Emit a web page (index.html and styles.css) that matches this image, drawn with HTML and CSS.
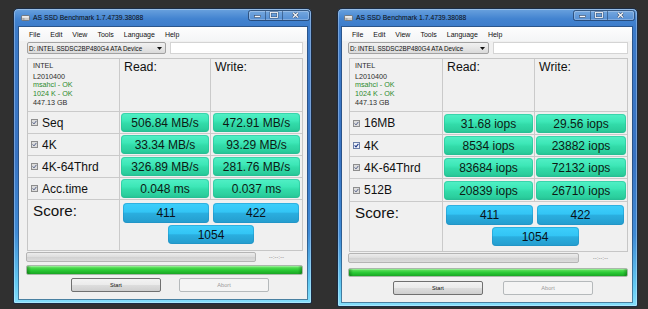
FILE: index.html
```html
<!DOCTYPE html>
<html>
<head>
<meta charset="utf-8">
<title>AS SSD Benchmark</title>
<link rel="stylesheet" href="styles.css">
</head>
<body>
<div class="desk">

  <section class="win win--a">
    <header class="titlebar">
      <svg class="app-icon" width="9" height="7" viewBox="0 0 9 7"><rect x="0.5" y="1.5" width="8" height="5" rx="1" fill="#c9c9c9" stroke="#6d6d6d" stroke-width="0.8"/><rect x="1.2" y="2.2" width="6.6" height="1.4" fill="#f4f4f4"/><rect x="1.5" y="4.6" width="2" height="0.8" fill="#7a7a7a"/></svg>
      <span class="title">AS SSD Benchmark 1.7.4739.38088</span>
      <svg class="caption" width="62" height="11" viewBox="0 0 62 11">
        <rect x="0.5" y="0.5" width="61" height="10" rx="2" fill="rgba(255,255,255,0.12)" stroke="rgba(16,38,70,0.6)"/>
        <rect x="1.5" y="1.5" width="59" height="8" rx="1.5" fill="none" stroke="rgba(255,255,255,0.35)" stroke-width="0.7"/>
        <line x1="17.5" y1="1" x2="17.5" y2="10" stroke="rgba(16,38,70,0.45)"/>
        <line x1="34.5" y1="1" x2="34.5" y2="10" stroke="rgba(16,38,70,0.45)"/>
        <rect x="6.5" y="5.5" width="6" height="2" fill="#f4f6fa" stroke="#3a4c66" stroke-width="0.6"/>
        <rect x="22.5" y="2.5" width="7" height="5" fill="none" stroke="#3a4c66" stroke-width="1.8"/>
        <rect x="22.5" y="2.5" width="7" height="5" fill="none" stroke="#f4f6fa" stroke-width="0.9"/>
        <path d="M45 2.8 L50 7.4 M50 2.8 L45 7.4" stroke="#3a4c66" stroke-width="2.4" fill="none"/>
        <path d="M45 2.8 L50 7.4 M50 2.8 L45 7.4" stroke="#f4f6fa" stroke-width="1.3" fill="none"/>
      </svg>
    </header>
    <div class="client">
      <nav class="menubar"><span>File</span><span>Edit</span><span>View</span><span>Tools</span><span>Language</span><span>Help</span></nav>
      <div class="toolrow">
        <div class="combo"><span>D: INTEL SSDSC2BP480G4 ATA Device</span><svg class="arrow" width="5" height="3" viewBox="0 0 5 3"><path d="M0 0 H5 L2.5 3 Z" fill="#111"/></svg></div>
        <div class="textbox"></div>
      </div>
      <div class="panel">
        <div class="cell info">
          <div class="vendor">INTEL</div>
          <div>L2010400</div>
          <div class="ok">msahci - OK</div>
          <div class="ok">1024 K - OK</div>
          <div>447.13 GB</div>
        </div>
        <div class="cell head">Read:</div>
        <div class="cell head">Write:</div>

        <div class="cell label"><svg class="chk" width="7" height="7" viewBox="0 0 7 7"><rect x="0.5" y="0.5" width="6" height="6" fill="#dcdcdc" stroke="#8d8d8d"/><path d="M1.6 3.4 L3 4.9 L5.4 1.9" fill="none" stroke="#55628a" stroke-width="1"/></svg>Seq</div>
        <div class="cell val"><span class="gbox">506.84 MB/s</span></div>
        <div class="cell val"><span class="gbox">472.91 MB/s</span></div>

        <div class="cell label"><svg class="chk" width="7" height="7" viewBox="0 0 7 7"><rect x="0.5" y="0.5" width="6" height="6" fill="#dcdcdc" stroke="#8d8d8d"/><path d="M1.6 3.4 L3 4.9 L5.4 1.9" fill="none" stroke="#55628a" stroke-width="1"/></svg>4K</div>
        <div class="cell val"><span class="gbox">33.34 MB/s</span></div>
        <div class="cell val"><span class="gbox">93.29 MB/s</span></div>

        <div class="cell label"><svg class="chk" width="7" height="7" viewBox="0 0 7 7"><rect x="0.5" y="0.5" width="6" height="6" fill="#dcdcdc" stroke="#8d8d8d"/><path d="M1.6 3.4 L3 4.9 L5.4 1.9" fill="none" stroke="#55628a" stroke-width="1"/></svg>4K-64Thrd</div>
        <div class="cell val"><span class="gbox">326.89 MB/s</span></div>
        <div class="cell val"><span class="gbox">281.76 MB/s</span></div>

        <div class="cell label"><svg class="chk" width="7" height="7" viewBox="0 0 7 7"><rect x="0.5" y="0.5" width="6" height="6" fill="#dcdcdc" stroke="#8d8d8d"/><path d="M1.6 3.4 L3 4.9 L5.4 1.9" fill="none" stroke="#55628a" stroke-width="1"/></svg>Acc.time</div>
        <div class="cell val"><span class="gbox">0.048 ms</span></div>
        <div class="cell val"><span class="gbox">0.037 ms</span></div>

        <div class="cell score-label">Score:</div>
        <div class="cell scores"><span class="bbox">411</span><span class="bbox">422</span><span class="bbox bbox--total">1054</span></div>
      </div>
      <div class="progress-row"><div class="pbar"></div><span class="eta">--:--:--</span></div>
      <div class="greenbar"></div>
      <div class="btnrow"><button class="btn">Start</button><button class="btn" disabled>Abort</button></div>
    </div>
  </section>

  <section class="win win--b">
    <header class="titlebar">
      <svg class="app-icon" width="9" height="7" viewBox="0 0 9 7"><rect x="0.5" y="1.5" width="8" height="5" rx="1" fill="#c9c9c9" stroke="#6d6d6d" stroke-width="0.8"/><rect x="1.2" y="2.2" width="6.6" height="1.4" fill="#f4f4f4"/><rect x="1.5" y="4.6" width="2" height="0.8" fill="#7a7a7a"/></svg>
      <span class="title">AS SSD Benchmark 1.7.4739.38088</span>
      <svg class="caption" width="62" height="11" viewBox="0 0 62 11">
        <rect x="0.5" y="0.5" width="61" height="10" rx="2" fill="rgba(255,255,255,0.12)" stroke="rgba(16,38,70,0.6)"/>
        <rect x="1.5" y="1.5" width="59" height="8" rx="1.5" fill="none" stroke="rgba(255,255,255,0.35)" stroke-width="0.7"/>
        <line x1="17.5" y1="1" x2="17.5" y2="10" stroke="rgba(16,38,70,0.45)"/>
        <line x1="34.5" y1="1" x2="34.5" y2="10" stroke="rgba(16,38,70,0.45)"/>
        <rect x="6.5" y="5.5" width="6" height="2" fill="#f4f6fa" stroke="#3a4c66" stroke-width="0.6"/>
        <rect x="22.5" y="2.5" width="7" height="5" fill="none" stroke="#3a4c66" stroke-width="1.8"/>
        <rect x="22.5" y="2.5" width="7" height="5" fill="none" stroke="#f4f6fa" stroke-width="0.9"/>
        <path d="M45 2.8 L50 7.4 M50 2.8 L45 7.4" stroke="#3a4c66" stroke-width="2.4" fill="none"/>
        <path d="M45 2.8 L50 7.4 M50 2.8 L45 7.4" stroke="#f4f6fa" stroke-width="1.3" fill="none"/>
      </svg>
    </header>
    <div class="client">
      <nav class="menubar"><span>File</span><span>Edit</span><span>View</span><span>Tools</span><span>Language</span><span>Help</span></nav>
      <div class="toolrow">
        <div class="combo"><span>D: INTEL SSDSC2BP480G4 ATA Device</span><svg class="arrow" width="5" height="3" viewBox="0 0 5 3"><path d="M0 0 H5 L2.5 3 Z" fill="#111"/></svg></div>
        <div class="textbox"></div>
      </div>
      <div class="panel">
        <div class="cell info">
          <div class="vendor">INTEL</div>
          <div>L2010400</div>
          <div class="ok">msahci - OK</div>
          <div class="ok">1024 K - OK</div>
          <div>447.13 GB</div>
        </div>
        <div class="cell head">Read:</div>
        <div class="cell head">Write:</div>

        <div class="cell label"><svg class="chk" width="7" height="7" viewBox="0 0 7 7"><rect x="0.5" y="0.5" width="6" height="6" fill="#dcdcdc" stroke="#8d8d8d"/><path d="M1.6 3.4 L3 4.9 L5.4 1.9" fill="none" stroke="#55628a" stroke-width="1"/></svg>16MB</div>
        <div class="cell val"><span class="gbox">31.68 iops</span></div>
        <div class="cell val"><span class="gbox">29.56 iops</span></div>

        <div class="cell label"><svg class="chk" width="7" height="7" viewBox="0 0 7 7"><rect x="0.5" y="0.5" width="6" height="6" fill="#eef2fa" stroke="#6b7fa8"/><path d="M1.6 3.4 L3 4.9 L5.4 1.9" fill="none" stroke="#1f3a8a" stroke-width="1.1"/></svg>4K</div>
        <div class="cell val"><span class="gbox">8534 iops</span></div>
        <div class="cell val"><span class="gbox">23882 iops</span></div>

        <div class="cell label"><svg class="chk" width="7" height="7" viewBox="0 0 7 7"><rect x="0.5" y="0.5" width="6" height="6" fill="#dcdcdc" stroke="#8d8d8d"/><path d="M1.6 3.4 L3 4.9 L5.4 1.9" fill="none" stroke="#55628a" stroke-width="1"/></svg>4K-64Thrd</div>
        <div class="cell val"><span class="gbox">83684 iops</span></div>
        <div class="cell val"><span class="gbox">72132 iops</span></div>

        <div class="cell label"><svg class="chk" width="7" height="7" viewBox="0 0 7 7"><rect x="0.5" y="0.5" width="6" height="6" fill="#dcdcdc" stroke="#8d8d8d"/><path d="M1.6 3.4 L3 4.9 L5.4 1.9" fill="none" stroke="#55628a" stroke-width="1"/></svg>512B</div>
        <div class="cell val"><span class="gbox">20839 iops</span></div>
        <div class="cell val"><span class="gbox">26710 iops</span></div>

        <div class="cell score-label">Score:</div>
        <div class="cell scores"><span class="bbox">411</span><span class="bbox">422</span><span class="bbox bbox--total">1054</span></div>
      </div>
      <div class="progress-row"><div class="pbar"></div><span class="eta">--:--:--</span></div>
      <div class="greenbar"></div>
      <div class="btnrow"><button class="btn">Start</button><button class="btn" disabled>Abort</button></div>
    </div>
  </section>

</div>
</body>
</html>
```

FILE: styles.css
```css
* { box-sizing: border-box; }
html, body { margin: 0; padding: 0; }
body {
  width: 648px;
  height: 309px;
  overflow: hidden;
  background: #303030;
  font-family: "Liberation Sans", Arial, sans-serif;
  color: #161616;
}
.desk {
  display: flex;
  align-items: flex-start;
  gap: 25px;
  padding: 8px 0 0 13px;
}

/* ---------- window frame ---------- */
.win {
  display: flex;
  flex-direction: column;
  border: 1px solid #1b2c44;
  border-radius: 5px 5px 2px 2px;
  background: linear-gradient(180deg, #6aa2de 0px, #4283d0 10px, #3c7bc9 19px, #3873c2 50%, #3f8ad5 76%, #62c9f2 93%, #84defb 100%);
  box-shadow: inset 0 0 0 1px rgba(255,255,255,0.3);
}
.win--a { width: 299px; height: 296px; padding: 0 4px 4px 5px; }
.win--b { width: 301px; height: 299px; padding: 0 5px 4px 4px; }

.titlebar {
  height: 18px;
  flex: 0 0 18px;
  display: flex;
  align-items: flex-start;
}
.app-icon { margin: 5px 0 0 2px; flex: none; }
.title {
  margin: 4px 0 0 3px;
  font-size: 6.8px;
  line-height: 9px;
  color: #0c0c0c;
  white-space: nowrap;
}
.caption { margin: 1px -3px 0 auto; flex: none; }

/* ---------- client ---------- */
.client {
  flex: 1;
  display: flex;
  flex-direction: column;
  background: #f0f0f0;
  box-shadow: 0 0 0 1px rgba(30,55,90,0.55);
}
.menubar {
  height: 14px;
  flex: none;
  display: flex;
  align-items: center;
  padding-left: 5px;
  font-size: 7px;
  color: #111;
  background: linear-gradient(180deg, #fdfdfd 0%, #f4f5f6 100%);
}
.menubar span { padding: 0 5px; }

.toolrow {
  height: 12px;
  flex: none;
  margin: 1px 4px 0 8px;
  display: flex;
  gap: 4px;
}
.win--b .toolrow { margin-left: 6px; gap: 4px; }
.combo {
  width: 139px;
  flex: none;
  display: flex;
  align-items: center;
  justify-content: space-between;
  padding: 0 3px 0 1px;
  border: 1px solid #a2a2a2;
  border-radius: 2px;
  background: linear-gradient(180deg, #f1f1f1 0%, #e6e6e6 50%, #dadada 100%);
  font-size: 6.3px;
  color: #111;
  white-space: nowrap;
  overflow: hidden;
}
.win--b .combo { width: 141px; }
.arrow { flex: none; }
.textbox {
  flex: 1;
  background: #ffffff;
  border: 1px solid #d4d4d4;
}

/* ---------- results panel ---------- */
.panel {
  flex: none;
  margin: 4px 4px 0 8px;
  display: grid;
  gap: 1px;
  background: #cacaca;
  border: 1px solid #c6c6c6;
}
.win--a .panel {
  grid-template-columns: 91px 90px 91px;
  grid-template-rows: 52px 21px 21px 21px 21px 50px;
}
.win--b .panel {
  margin-left: 7px;
  grid-template-columns: 92px 91px 92px;
  grid-template-rows: 52px 22px 21px 21px 22px 49px;
}
.cell { background: #f0f0f0; }
.info {
  padding: 2.5px 0 0 5px;
  font-size: 7.2px;
  line-height: 8.7px;
  color: #2c2c2c;
}
.info .vendor { margin-bottom: 2.5px; }
.info .ok { color: #2d8a2d; }
.head {
  padding: 1px 0 0 4px;
  font-size: 12.3px;
  line-height: 15px;
  color: #111;
}
.label {
  display: flex;
  align-items: center;
  padding-left: 3px;
  font-size: 12px;
  color: #111;
}
.chk { flex: none; margin-right: 4px; }
.val {
  display: flex;
  align-items: center;
  padding: 0 1px;
}
.win--a .val:nth-child(3n) { padding: 0 2px; }
.gbox {
  width: 100%;
  height: 19px;
  border-radius: 4px;
  text-align: center;
  font-size: 12px;
  line-height: 20px;
  color: #0c1a14;
  background: linear-gradient(180deg, #52f0c6 0%, #3de7b7 40%, #32dba9 55%, #2bce9d 85%, #24bf91 100%);
  box-shadow: inset 0 0 0 1px rgba(40,190,150,0.55);
}
.score-label {
  padding: 2px 0 0 5px;
  font-size: 15.2px;
  line-height: 17px;
  color: #111;
}
.scores {
  grid-column: 2 / 4;
  display: flex;
  flex-wrap: wrap;
  justify-content: center;
  align-content: flex-start;
  gap: 2px 4px;
  padding-top: 3px;
}
.bbox {
  width: 86px;
  height: 20px;
  border-radius: 4px;
  text-align: center;
  font-size: 12px;
  line-height: 21px;
  color: #08121a;
  background: linear-gradient(180deg, #3ecffb 0%, #33c5f5 45%, #2aaedf 52%, #249ccd 100%);
  box-shadow: inset 0 0 0 1px rgba(30,140,190,0.45);
}
.win--b .bbox { width: 87px; }
.bbox--total { height: 19px; line-height: 20px; }

/* ---------- progress & buttons ---------- */
.progress-row {
  flex: none;
  display: flex;
  align-items: center;
  margin: 1px 0 0 7px;
  height: 10px;
}
.win--b .progress-row { margin: 1px 0 0 6px; }
.pbar {
  width: 230px;
  height: 10px;
  border: 1px solid #b4b4b4;
  border-radius: 2px;
  background: linear-gradient(180deg, #ececec 0%, #dedede 45%, #d2d2d2 55%, #dcdcdc 100%);
}
.win--b .pbar { width: 231px; }
.eta {
  margin-left: 13px;
  font-size: 5px;
  color: #6a6a6a;
  letter-spacing: 0.3px;
}
.win--b .eta { margin-left: 14px; }
.greenbar {
  flex: none;
  height: 10px;
  margin: 3px 4px 0 7px;
  border: 1px solid #a9b8a9;
  border-radius: 2px;
  background:
    linear-gradient(90deg, rgba(0,60,0,0.35) 0px, rgba(0,0,0,0) 4px, rgba(0,0,0,0) calc(100% - 4px), rgba(0,60,0,0.35) 100%),
    linear-gradient(180deg, #a6f3a6 0%, #4fd94f 22%, #2ccb36 50%, #20b52a 80%, #1aa524 100%);
}
.win--b .greenbar { height: 9px; margin: 5px 4px 0 6px; }
.btnrow {
  flex: none;
  display: flex;
  gap: 18px;
  margin-top: 3px;
  padding-left: 52px;
}
.win--b .btnrow { margin-top: 4px; padding-left: 51px; gap: 20px; }
.btn {
  width: 90px;
  height: 14px;
  padding: 0;
  border: 1px solid #707070;
  border-radius: 2px;
  background: linear-gradient(180deg, #f3f3f3 0%, #ebebeb 48%, #dddddd 52%, #cfcfcf 100%);
  font-family: "Liberation Sans", Arial, sans-serif;
  font-size: 5.6px;
  color: #111;
}
.btn:disabled {
  border-color: #b5b9bb;
  background: #f4f4f4;
  color: #9a9a9a;
}
```
